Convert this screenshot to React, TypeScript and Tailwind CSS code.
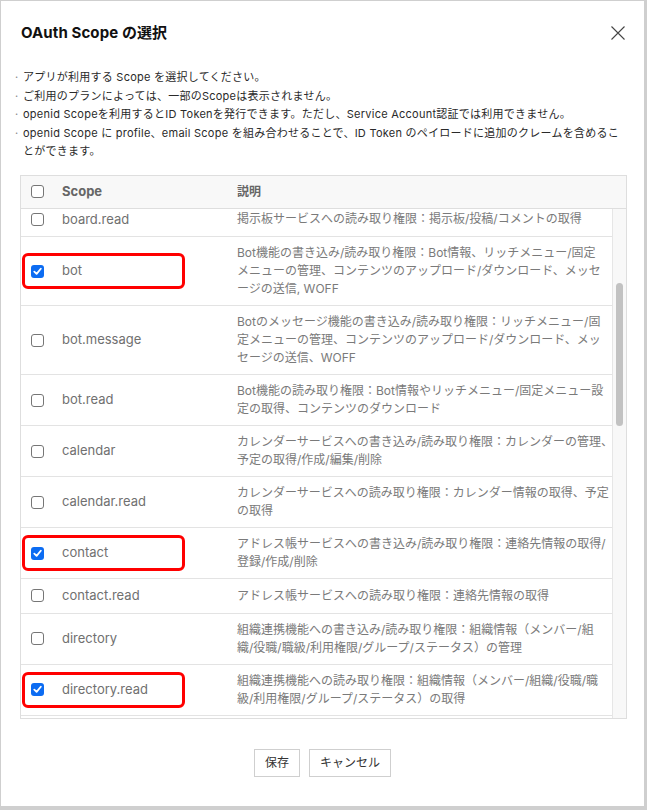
import React from "react";

type Row = { scope: string; lines: string[]; checked?: boolean; mark?: boolean };

const rows: Row[] = [
  { scope: "board.read", lines: ["掲示板サービスへの読み取り権限：掲示板/投稿/コメントの取得"] },
  {
    scope: "bot",
    checked: true,
    mark: true,
    lines: [
      "Bot機能の書き込み/読み取り権限：Bot情報、リッチメニュー/固定",
      "メニューの管理、コンテンツのアップロード/ダウンロード、メッセ",
      "ージの送信, WOFF",
    ],
  },
  {
    scope: "bot.message",
    lines: [
      "Botのメッセージ機能の書き込み/読み取り権限：リッチメニュー/固",
      "定メニューの管理、コンテンツのアップロード/ダウンロード、メッ",
      "セージの送信、WOFF",
    ],
  },
  {
    scope: "bot.read",
    lines: ["Bot機能の読み取り権限：Bot情報やリッチメニュー/固定メニュー設", "定の取得、コンテンツのダウンロード"],
  },
  {
    scope: "calendar",
    lines: ["カレンダーサービスへの書き込み/読み取り権限：カレンダーの管理、", "予定の取得/作成/編集/削除"],
  },
  {
    scope: "calendar.read",
    lines: ["カレンダーサービスへの読み取り権限：カレンダー情報の取得、予定", "の取得"],
  },
  {
    scope: "contact",
    checked: true,
    mark: true,
    lines: ["アドレス帳サービスへの書き込み/読み取り権限：連絡先情報の取得/", "登録/作成/削除"],
  },
  { scope: "contact.read", lines: ["アドレス帳サービスへの読み取り権限：連絡先情報の取得"] },
  {
    scope: "directory",
    lines: ["組織連携機能への書き込み/読み取り権限：組織情報（メンバー/組", "織/役職/職級/利用権限/グループ/ステータス）の管理"],
  },
  {
    scope: "directory.read",
    checked: true,
    mark: true,
    lines: ["組織連携機能への読み取り権限：組織情報（メンバー/組織/役職/職", "級/利用権限/グループ/ステータス）の取得"],
  },
];

const bullets = [
  "アプリが利用する Scope を選択してください。",
  "ご利用のプランによっては、一部のScopeは表示されません。",
  "openid Scopeを利用するとID Tokenを発行できます。ただし、Service Account認証では利用できません。",
  "openid Scope に profile、email Scope を組み合わせることで、ID Token のペイロードに追加のクレームを含めるこ",
  "とができます。",
];

function Box({ checked }: { checked?: boolean }) {
  if (checked) {
    return (
      <span className="flex h-[13px] w-[13px] items-center justify-center rounded-[3px] bg-[#0c6cf2]">
        <svg width="9" height="9" viewBox="0 0 9 9">
          <path d="M1.3 4.6 L3.6 6.9 L7.8 1.8" fill="none" stroke="#fff" strokeWidth="1.8" strokeLinecap="round" strokeLinejoin="round" />
        </svg>
      </span>
    );
  }
  return <span className="block h-[13px] w-[13px] rounded-[3px] border border-[#767676] bg-white" />;
}

export default function App() {
  const font = { fontFamily: '"Inter", "Noto Sans CJK JP", sans-serif' };
  return (
    <div className="h-[810px] w-[647px] bg-[#cfcfcf] pb-[4px] pl-[1px] pr-[3px] pt-[1px]" style={font}>
      <div className="flex h-full flex-col bg-white pl-[19px] pr-[17px] pt-[22px]">
        <div className="flex h-[20px] items-center justify-between pl-[1px]">
          <h1 className="text-[15px] font-bold leading-[20px] tracking-[0.1px] text-[#111]">OAuth Scope の選択</h1>
          <svg width="16" height="16" viewBox="0 0 16 16" className="mr-[1px]">
            <path d="M1.5 1.5 L14.5 14.5 M14.5 1.5 L1.5 14.5" stroke="#444" strokeWidth="1.1" fill="none" />
          </svg>
        </div>

        <ul className="-ml-[7px] mt-[25px] text-[11px] leading-[18.5px] text-[#2a2a2a]">
          {bullets.map((b, i) => (
            <li key={i} className="flex whitespace-nowrap">
              <span className="w-[10px] shrink-0 pl-[2px] text-[#888]">{i === 4 ? "" : "·"}</span>
              <span className="tracking-[0.25px]">{b}</span>
            </li>
          ))}
        </ul>

        <div className="mt-[14px] w-[607px] border border-[#dedede]">
          <div className="flex h-[33px] items-center border-b border-[#dedede] bg-[#f8f8f8]">
            <div className="w-[41px] shrink-0 pl-[10px]">
              <Box />
            </div>
            <div className="w-[175px] shrink-0 text-[13px] font-bold text-[#666]">Scope</div>
            <div className="text-[12px] font-bold text-[#666]">説明</div>
          </div>
          <div className="flex h-[509px]">
            <div className="min-w-0 flex-1 overflow-hidden">
              <div className="-mt-[6px]">
                {rows.map((r) => (
                  <div key={r.scope} className="relative flex items-center border-b border-[#e3e3e3] py-[7px]">
                    <div className="w-[41px] shrink-0 pl-[10px]">
                      <Box checked={r.checked} />
                    </div>
                    <div className="w-[175px] shrink-0 text-[13px] text-[#707070]">{r.scope}</div>
                    <div className="min-w-0 text-[12px] leading-[18px] text-[#7a7a7a]">
                      {r.lines.map((l, i) => (
                        <div key={i} className="whitespace-nowrap">
                          {l}
                        </div>
                      ))}
                    </div>
                    {r.mark && (
                      <div className="pointer-events-none absolute left-[1px] top-1/2 h-[36px] w-[163px] -translate-y-1/2 rounded-[6px] border-[3px] border-[#ff0000]" />
                    )}
                  </div>
                ))}
                <div className="h-[51px] border-b border-[#e3e3e3]" />
              </div>
            </div>
            <div className="w-[14px] shrink-0 border-l border-[#e6e6e6] bg-[#f8f8f8] pl-[3px] pt-[74px]">
              <div className="h-[143px] w-[7px] rounded-full bg-[#c2c2c2]" />
            </div>
          </div>
        </div>

        <div className="mt-[30px] flex justify-center gap-[9px] pr-[2px]">
          <button className="h-[28px] w-[46px] border border-[#cfcfcf] bg-white text-[12px] text-[#333]">保存</button>
          <button className="h-[28px] w-[82px] border border-[#cfcfcf] bg-white text-[12px] text-[#333]">キャンセル</button>
        </div>
      </div>
    </div>
  );
}
